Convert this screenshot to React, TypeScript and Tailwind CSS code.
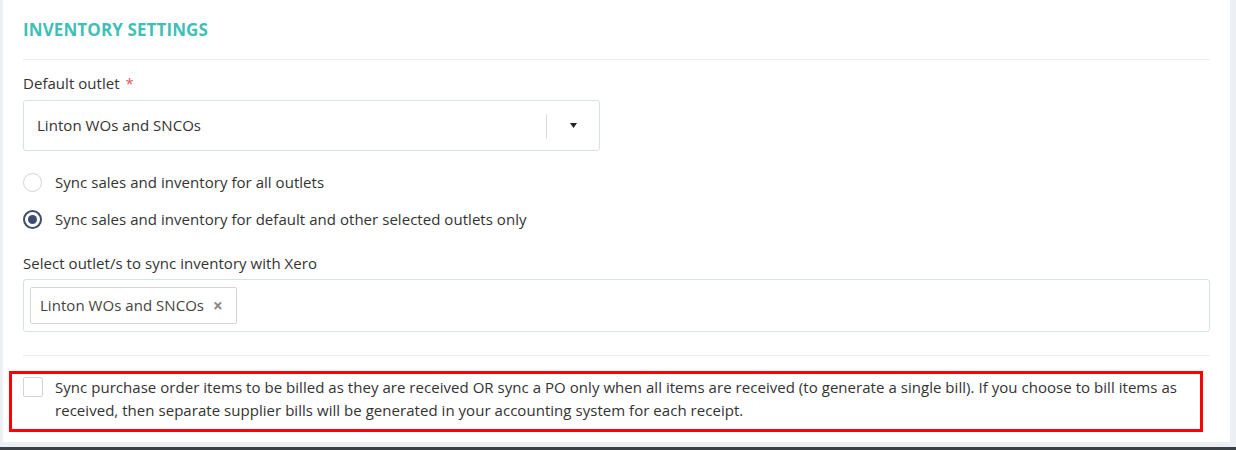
import React from "react";

export default function App() {
  const font = { fontFamily: '"Open Sans", "Noto Sans", sans-serif' };
  return (
    <div className="w-[1236px] h-[450px] bg-[#eceff3] overflow-hidden flex flex-col" style={font}>
      <div className="flex-1 flex pl-[3px] pr-[6px]">
        <div className="flex-1 bg-white pl-[20px] pr-[20px] pb-[10px] flex flex-col tracking-[0.04px]">
          <div className="h-[60px] flex items-center border-b border-[#eceeef]">
            <span className="text-[17px] font-bold text-[#3fbfb7] leading-[20px] tracking-[0.1px]">INVENTORY SETTINGS</span>
          </div>
          <div className="pt-[13px] text-[15px] text-[#333] leading-[20px]">
            Default outlet <span className="text-[#e05858] ml-[2px]">*</span>
          </div>
          <div className="mt-[7px] w-[577px] h-[51px] border border-[#d7e3e2] rounded-[3px] flex items-center pl-[13px]">
            <span className="flex-1 text-[15px] text-[#333]">Linton WOs and SNCOs</span>
            <div className="w-px h-[24px] bg-[#d9dcde]" />
            <div className="w-[52px] flex justify-center">
              <svg width="7" height="5" viewBox="0 0 7 5"><path d="M0 0 L7 0 L3.5 5 Z" fill="#222" /></svg>
            </div>
          </div>
          <div className="mt-[21px] flex items-center h-[20px]">
            <div className="w-[19px] h-[19px] rounded-full border border-[#d4d4d0] bg-white" />
            <span className="ml-[13px] text-[15px] text-[#333]">Sync sales and inventory for all outlets</span>
          </div>
          <div className="mt-[17px] flex items-center h-[20px]">
            <div className="w-[19px] h-[19px] rounded-full border-[2px] border-[#3d4b70] bg-white flex items-center justify-center">
              <div className="w-[9px] h-[9px] rounded-full bg-[#3d4b70]" />
            </div>
            <span className="ml-[13px] text-[15px] text-[#333]">Sync sales and inventory for default and other selected outlets only</span>
          </div>
          <div className="mt-[24px] text-[15px] text-[#333] leading-[20px]">Select outlet/s to sync inventory with Xero</div>
          <div className="mt-[6px] h-[53px] border border-[#d7e3e2] rounded-[3px] flex items-center pl-[6px]">
            <div className="h-[37px] border border-[#d3d6d8] rounded-[2px] flex items-center pl-[9px] pr-[13px]">
              <span className="text-[15px] text-[#444]">Linton WOs and SNCOs</span>
              <span className="ml-[9px] text-[17px] text-[#888] font-bold leading-none">×</span>
            </div>
          </div>
          <div className="mt-[23px] border-t border-[#eceeef]" />
          <div className="mt-[15px] -ml-[14px] w-[1194px] h-[61px] border-[3px] border-[#ff0000] flex items-start pl-[11px] pt-[3px]">
            <div className="w-[20px] h-[20px] border border-[#d4d4d0] rounded-[2px] bg-white shrink-0" />
            <p className="ml-[12px] text-[15px] text-[#333] leading-[23px] -mt-[1px] w-[1150px]">
              Sync purchase order items to be billed as they are received OR sync a PO only when all items are received (to generate a single bill). If you choose to bill items as received, then separate supplier bills will be generated in your accounting system for each receipt.
            </p>
          </div>
        </div>
      </div>
      <div className="h-[5px]" />
      <div className="h-[3px] bg-[#3b4046]" />
    </div>
  );
}
